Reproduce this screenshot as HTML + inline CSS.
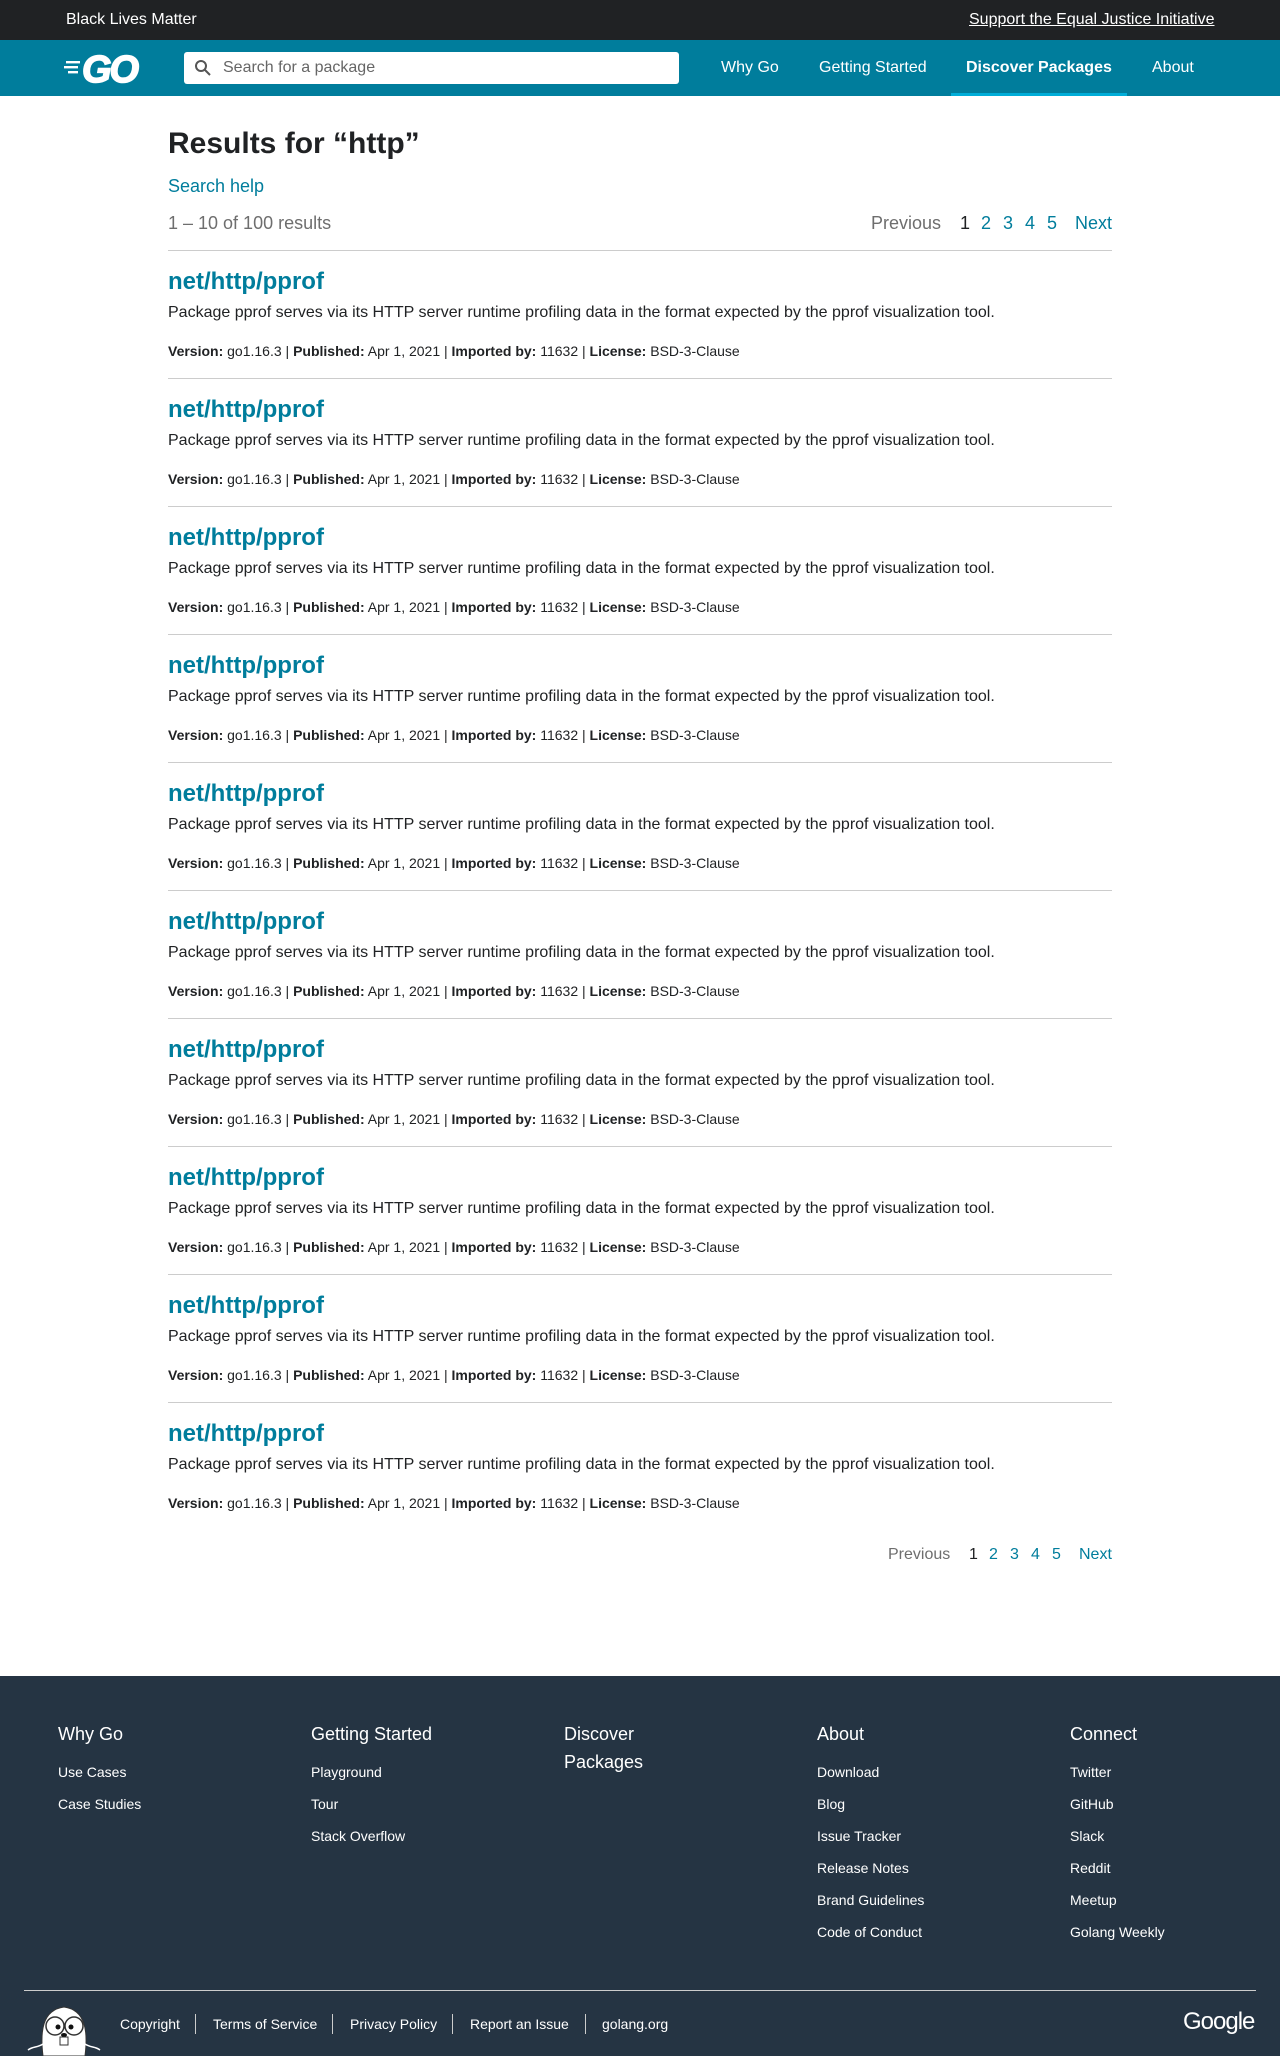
<!DOCTYPE html>
<html><head><meta charset="utf-8"><style>
*{margin:0;padding:0;box-sizing:border-box}
body{width:1280px;height:2056px;position:relative;font-family:"Liberation Sans",Arial,sans-serif;background:#fff;color:#202224;overflow:hidden}
.abs{position:absolute;white-space:nowrap}
a{text-decoration:none}
.top{position:absolute;left:0;top:0;width:1280px;height:40px;background:#202224;color:#fff;font-size:16px}
.nav{position:absolute;left:0;top:40px;width:1280px;height:56px;background:#007d9c;color:#fff;font-size:16px}
.teal{color:#007d9c}
.res{position:absolute;left:168px;width:944px;height:128px;border-top:1px solid #ccc}
.res .t{position:absolute;top:16px;left:0;font-size:24px;font-weight:bold;color:#007d9c;line-height:30px}
.res .d{position:absolute;top:52px;left:0;font-size:16px;line-height:20px;white-space:nowrap}
.res .m{position:absolute;top:91px;left:0;font-size:14px;line-height:18px;white-space:nowrap}
.foot{position:absolute;left:0;top:1676px;width:1280px;height:380px;background:#253443;color:#fff}
.col{position:absolute;top:44px}
.col h4{font-weight:normal;font-size:18px;line-height:28px;margin-bottom:8px}
.col div{font-size:14px;line-height:32px}
</style></head><body>
<div class="top">
 <span class="abs" style="left:66px;top:11px">Black Lives Matter</span>
 <span class="abs" style="left:969px;top:11px;text-decoration:underline">Support the Equal Justice Initiative</span>
</div>
<div class="nav">
 <svg class="abs" style="left:64px;top:12px" width="86" height="32" viewBox="0 0 86 32">
  <g fill="#fff"><rect x="2" y="9" width="14" height="2.4"/><rect x="0" y="14" width="14" height="2.4"/><rect x="4" y="19" width="10" height="2.4"/></g>
  <text x="18" y="30" font-family="Liberation Sans" font-weight="bold" font-style="italic" font-size="38" fill="#fff" stroke="#fff" stroke-width="1.5" letter-spacing="-2">GO</text>
 </svg>
 <div class="abs" style="left:184px;top:12px;width:495px;height:32px;background:#fff;border-radius:3px">
  <svg class="abs" style="left:10px;top:7px" width="18" height="18" viewBox="0 0 18 18"><circle cx="7" cy="7" r="5" fill="none" stroke="#555" stroke-width="2"/><path d="M11 11l5 5" stroke="#555" stroke-width="2"/></svg>
  <span class="abs" style="left:39px;top:7px;color:#666;font-size:16px">Search for a package</span>
 </div>
 <span class="abs" style="left:721px;top:19px">Why Go</span>
 <span class="abs" style="left:819px;top:19px">Getting Started</span>
 <span class="abs" style="left:966px;top:19px;font-weight:bold">Discover Packages</span>
 <span class="abs" style="left:1152px;top:19px">About</span>
 <div class="abs" style="left:951px;top:53px;width:176px;height:3px;background:#00add8"></div>
</div>
<div class="abs" style="left:168px;top:127px;font-size:30px;font-weight:bold">Results for “http”</div>
<div class="abs teal" style="left:168px;top:176px;font-size:18px">Search help</div>
<div class="abs" style="left:168px;top:213px;font-size:18px;color:#6e6e6e">1 – 10 of 100 results</div>
<div class="abs" style="left:871px;top:213px;font-size:18px;color:#6e6e6e">Previous</div>
<div class="abs" style="left:960px;top:213px;font-size:18px">1</div>
<div class="abs teal" style="left:981px;top:213px;font-size:18px">2</div>
<div class="abs teal" style="left:1003px;top:213px;font-size:18px">3</div>
<div class="abs teal" style="left:1025px;top:213px;font-size:18px">4</div>
<div class="abs teal" style="left:1047px;top:213px;font-size:18px">5</div>
<div class="abs teal" style="left:1075px;top:213px;font-size:18px">Next</div>

<div class="res" style="top:250px"><div class="t">net/http/pprof</div><div class="d">Package pprof serves via its HTTP server runtime profiling data in the format expected by the pprof visualization tool.</div><div class="m"><b>Version:</b> go1.16.3 | <b>Published:</b> Apr 1, 2021 | <b>Imported by:</b> 11632 | <b>License:</b> BSD-3-Clause</div></div>
<div class="res" style="top:378px"><div class="t">net/http/pprof</div><div class="d">Package pprof serves via its HTTP server runtime profiling data in the format expected by the pprof visualization tool.</div><div class="m"><b>Version:</b> go1.16.3 | <b>Published:</b> Apr 1, 2021 | <b>Imported by:</b> 11632 | <b>License:</b> BSD-3-Clause</div></div>
<div class="res" style="top:506px"><div class="t">net/http/pprof</div><div class="d">Package pprof serves via its HTTP server runtime profiling data in the format expected by the pprof visualization tool.</div><div class="m"><b>Version:</b> go1.16.3 | <b>Published:</b> Apr 1, 2021 | <b>Imported by:</b> 11632 | <b>License:</b> BSD-3-Clause</div></div>
<div class="res" style="top:634px"><div class="t">net/http/pprof</div><div class="d">Package pprof serves via its HTTP server runtime profiling data in the format expected by the pprof visualization tool.</div><div class="m"><b>Version:</b> go1.16.3 | <b>Published:</b> Apr 1, 2021 | <b>Imported by:</b> 11632 | <b>License:</b> BSD-3-Clause</div></div>
<div class="res" style="top:762px"><div class="t">net/http/pprof</div><div class="d">Package pprof serves via its HTTP server runtime profiling data in the format expected by the pprof visualization tool.</div><div class="m"><b>Version:</b> go1.16.3 | <b>Published:</b> Apr 1, 2021 | <b>Imported by:</b> 11632 | <b>License:</b> BSD-3-Clause</div></div>
<div class="res" style="top:890px"><div class="t">net/http/pprof</div><div class="d">Package pprof serves via its HTTP server runtime profiling data in the format expected by the pprof visualization tool.</div><div class="m"><b>Version:</b> go1.16.3 | <b>Published:</b> Apr 1, 2021 | <b>Imported by:</b> 11632 | <b>License:</b> BSD-3-Clause</div></div>
<div class="res" style="top:1018px"><div class="t">net/http/pprof</div><div class="d">Package pprof serves via its HTTP server runtime profiling data in the format expected by the pprof visualization tool.</div><div class="m"><b>Version:</b> go1.16.3 | <b>Published:</b> Apr 1, 2021 | <b>Imported by:</b> 11632 | <b>License:</b> BSD-3-Clause</div></div>
<div class="res" style="top:1146px"><div class="t">net/http/pprof</div><div class="d">Package pprof serves via its HTTP server runtime profiling data in the format expected by the pprof visualization tool.</div><div class="m"><b>Version:</b> go1.16.3 | <b>Published:</b> Apr 1, 2021 | <b>Imported by:</b> 11632 | <b>License:</b> BSD-3-Clause</div></div>
<div class="res" style="top:1274px"><div class="t">net/http/pprof</div><div class="d">Package pprof serves via its HTTP server runtime profiling data in the format expected by the pprof visualization tool.</div><div class="m"><b>Version:</b> go1.16.3 | <b>Published:</b> Apr 1, 2021 | <b>Imported by:</b> 11632 | <b>License:</b> BSD-3-Clause</div></div>
<div class="res" style="top:1402px"><div class="t">net/http/pprof</div><div class="d">Package pprof serves via its HTTP server runtime profiling data in the format expected by the pprof visualization tool.</div><div class="m"><b>Version:</b> go1.16.3 | <b>Published:</b> Apr 1, 2021 | <b>Imported by:</b> 11632 | <b>License:</b> BSD-3-Clause</div></div>

<div class="abs" style="left:888px;top:1546px;font-size:16px;color:#6e6e6e">Previous</div>
<div class="abs" style="left:969px;top:1546px;font-size:16px">1</div>
<div class="abs teal" style="left:989px;top:1546px;font-size:16px">2</div>
<div class="abs teal" style="left:1010px;top:1546px;font-size:16px">3</div>
<div class="abs teal" style="left:1031px;top:1546px;font-size:16px">4</div>
<div class="abs teal" style="left:1052px;top:1546px;font-size:16px">5</div>
<div class="abs teal" style="left:1079px;top:1546px;font-size:16px">Next</div>

<div class="foot">
 <div class="col" style="left:58px"><h4>Why Go</h4><div>Use Cases</div><div>Case Studies</div></div>
 <div class="col" style="left:311px"><h4>Getting Started</h4><div>Playground</div><div>Tour</div><div>Stack Overflow</div></div>
 <div class="col" style="left:564px"><h4>Discover<br>Packages</h4></div>
 <div class="col" style="left:817px"><h4>About</h4><div>Download</div><div>Blog</div><div>Issue Tracker</div><div>Release Notes</div><div>Brand Guidelines</div><div>Code of Conduct</div></div>
 <div class="col" style="left:1070px"><h4>Connect</h4><div>Twitter</div><div>GitHub</div><div>Slack</div><div>Reddit</div><div>Meetup</div><div>Golang Weekly</div></div>
 <div class="abs" style="left:24px;top:314px;width:1232px;height:1px;background:#ccc"></div>
 <svg class="abs" style="left:24px;top:326px" width="80" height="54" viewBox="0 0 80 54">
  <path d="M19 54 C16 30 18 8 40 5 C62 8 64 30 61 54 Z" fill="#fff" stroke="#333"/>
  <circle cx="31" cy="24" r="9" fill="#fff" stroke="#333" stroke-width="1.5"/><circle cx="50" cy="24" r="9" fill="#fff" stroke="#333" stroke-width="1.5"/>
  <circle cx="34" cy="25" r="2.5" fill="#111"/><circle cx="47" cy="25" r="2.5" fill="#111"/>
  <ellipse cx="40" cy="33" rx="3" ry="2" fill="#111"/>
  <rect x="36" y="35" width="8" height="8" fill="#fff" stroke="#333"/>
  <path d="M19 42 C13 46 9 44 4 48 M61 42 C67 46 71 44 76 48" stroke="#fff" stroke-width="1.5" fill="none"/>
 </svg>
 <div class="abs" style="left:120px;top:340px;font-size:14px">Copyright</div>
 <div class="abs" style="left:195px;top:338px;width:1px;height:20px;background:#ccc"></div>
 <div class="abs" style="left:213px;top:340px;font-size:14px">Terms of Service</div>
 <div class="abs" style="left:332px;top:338px;width:1px;height:20px;background:#ccc"></div>
 <div class="abs" style="left:350px;top:340px;font-size:14px">Privacy Policy</div>
 <div class="abs" style="left:452px;top:338px;width:1px;height:20px;background:#ccc"></div>
 <div class="abs" style="left:470px;top:340px;font-size:14px">Report an Issue</div>
 <div class="abs" style="left:585px;top:338px;width:1px;height:20px;background:#ccc"></div>
 <div class="abs" style="left:602px;top:340px;font-size:14px">golang.org</div>
 <div class="abs" style="left:1183px;top:332px;font-size:24px;letter-spacing:-1px">Google</div>
</div>
</body></html>
